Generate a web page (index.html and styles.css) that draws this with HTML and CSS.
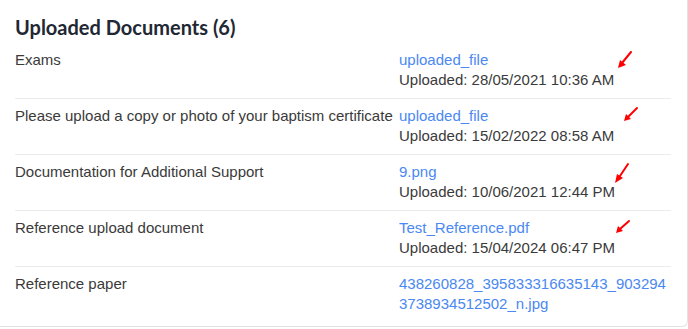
FILE: index.html
```html
<!DOCTYPE html>
<html>
<head>
<meta charset="utf-8">
<link rel="stylesheet" href="styles.css">
</head>
<body>
<div class="card">
  <h2 class="title">Uploaded Documents (6)</h2>
  <div class="row">
    <div class="label">Exams</div>
    <div class="value"><a class="link" href="#">uploaded_file</a><div class="meta">Uploaded: 28/05/2021 10:36 AM</div></div>
    <svg class="arrow a1" width="20" height="20" viewBox="0 0 20 20"><path d="M15 1 L6 12" stroke="#f00" stroke-width="2" stroke-linecap="round"/><path d="M2 17 L4 9 L10 14 Z" fill="#f00"/></svg>
  </div>
  <div class="row">
    <div class="label">Please upload a copy or photo of your baptism certificate</div>
    <div class="value"><a class="link" href="#">uploaded_file</a><div class="meta">Uploaded: 15/02/2022 08:58 AM</div></div>
    <svg class="arrow a2" width="20" height="20" viewBox="0 0 20 20"><path d="M15 3 L6 12" stroke="#f00" stroke-width="2" stroke-linecap="round"/><path d="M2 16 L4 9 L9 14 Z" fill="#f00"/></svg>
  </div>
  <div class="row">
    <div class="label">Documentation for Additional Support</div>
    <div class="value"><a class="link" href="#">9.png</a><div class="meta">Uploaded: 10/06/2021 12:44 PM</div></div>
    <svg class="arrow a3" width="20" height="24" viewBox="0 0 20 24"><path d="M15 2 L7 14" stroke="#f00" stroke-width="2" stroke-linecap="round"/><path d="M2 21 L4 12 L10 16 Z" fill="#f00"/></svg>
  </div>
  <div class="row">
    <div class="label">Reference upload document</div>
    <div class="value"><a class="link" href="#">Test_Reference.pdf</a><div class="meta">Uploaded: 15/04/2024 06:47 PM</div></div>
    <svg class="arrow a4" width="20" height="20" viewBox="0 0 20 20"><path d="M15 3 L6 11" stroke="#f00" stroke-width="2" stroke-linecap="round"/><path d="M2 15 L4 8 L9 13 Z" fill="#f00"/></svg>
  </div>
  <div class="row last">
    <div class="label">Reference paper</div>
    <div class="value"><a class="link" href="#">438260828_395833316635143_9032943738934512502_n.jpg</a></div>
  </div>
</div>
</body>
</html>
```

FILE: styles.css
```css
html, body {
  margin: 0;
  padding: 0;
  background: #fff;
}
.card {
  width: 688px;
  height: 327px;
  box-sizing: border-box;
  padding: 0 16px 0 15px;
  border-right: 1px solid #e2e2e2;
  border-bottom: 1px solid #e2e2e2;
  border-bottom-right-radius: 6px;
  overflow: hidden;
}
.title {
  margin: 0;
  padding: 15px 0 4px;
  height: 24px;
  font-family: Lato, "Open Sans", sans-serif;
  font-weight: 700;
  font-size: 20px;
  line-height: 24px;
  color: #222833;
}
.row {
  position: relative;
  display: grid;
  grid-template-columns: 384px 1fr;
  padding: 7px 0 8px;
  border-bottom: 1px solid #ececec;
  font-family: "Liberation Sans", Arial, sans-serif;
  font-size: 15px;
  line-height: 20px;
  color: #3a3a3a;
}
.row.last {
  border-bottom: none;
}
.label {
  min-height: 40px;
}
.value {
  min-width: 0;
}
.link {
  color: #4a88f2;
  text-decoration: none;
  word-break: break-all;
}
.meta {
  color: #3a3a3a;
}
.arrow {
  position: absolute;
}
.a1 { left: 601px; top: 8px; }
.a2 { left: 607px; top: 6px; }
.a3 { left: 598px; top: 7px; }
.a4 { left: 599px; top: 7px; }
```
